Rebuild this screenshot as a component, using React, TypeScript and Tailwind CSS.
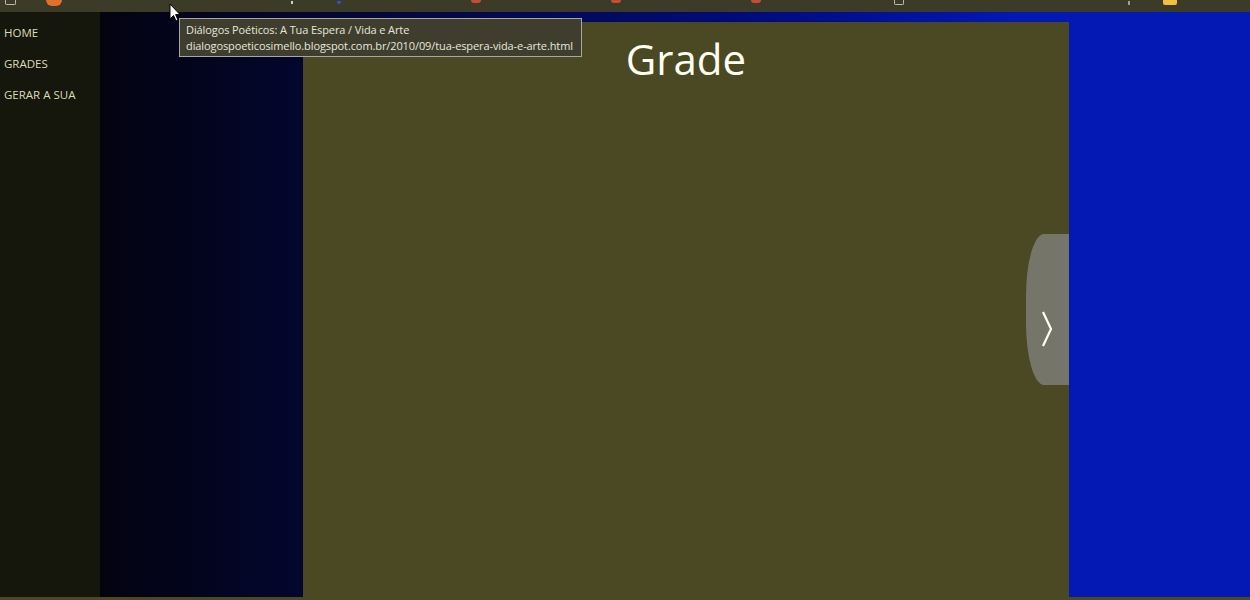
import React from "react";

function Cursor() {
  return (
    <svg width="12" height="19" viewBox="0 0 12 19" className="absolute left-[169px] top-[3px]">
      <path d="M1 1 L1 16 L4.5 12.5 L7 18 L9 17 L6.6 11.6 L11 11.6 Z" fill="#ffffff" stroke="#000000" strokeWidth="1" strokeLinejoin="round" />
    </svg>
  );
}

export default function App() {
  const nav = ["HOME", "GRADES", "GERAR A SUA"];
  return (
    <div className="relative w-[1250px] h-[600px] overflow-hidden flex flex-col font-['Open_Sans',sans-serif]">
      {/* bookmark bar remnant */}
      <div className="h-[12px] shrink-0 bg-[#3c3b27] flex items-start">
        <div className="ml-[5px] w-[11px] h-[5px] border-x border-b border-[#b8b8b0] rounded-b-[2px]" />
        <div className="ml-[30px] w-[16px] h-[6px] bg-[#e0702a] rounded-b-full" />
        <div className="ml-[229px] mt-[1px] w-[2px] h-[3px] bg-[#d0d0c8]" />
        <div className="ml-[44px] mt-[1px] w-[4px] h-[3px] bg-[#3050d0] rounded-b-full" />
        <div className="ml-[130px] w-[10px] h-[3px] bg-[#c05030] rounded-b-full" />
        <div className="ml-[130px] w-[10px] h-[3px] bg-[#c05030] rounded-b-full" />
        <div className="ml-[130px] w-[10px] h-[3px] bg-[#c05030] rounded-b-full" />
        <div className="ml-[133px] w-[10px] h-[5px] border-x border-b border-[#b8b8b0] rounded-b-[2px]" />
        <div className="ml-[224px] mt-[1px] w-[2px] h-[4px] bg-[#a0a098]" />
        <div className="ml-[33px] w-[14px] h-[5px] bg-[#f0c040] rounded-b-[2px]" />
      </div>

      <div className="flex-1 flex min-h-0">
        {/* sidebar */}
        <nav className="w-[100px] shrink-0 bg-[#15160c] pt-[5px] flex flex-col">
          {nav.map((n) => (
            <div key={n} className="h-[31px] pl-[4px] flex items-center text-[11.5px] text-[#dcdcb6] leading-none">
              {n}
            </div>
          ))}
        </nav>

        {/* content area */}
        <div className="flex-1 flex pt-[10px] pl-[203px] bg-gradient-to-r from-[#030310] via-[#000a78] via-[55%] to-[#0418b4] to-[80%]">
          <main className="relative w-[766px] bg-[#4a4923] flex flex-col items-center pt-[12px]">
            <h1 className="text-[42px] leading-[50px] text-[#fffff2] font-normal">Grade</h1>
            <button className="absolute right-0 top-[212px] w-[43px] h-[151px] bg-[#76756a] rounded-tl-[18px_62px] rounded-bl-[18px_62px] flex items-start pt-[77px] pl-[15px]">
              <svg width="12" height="36" viewBox="0 0 12 36">
                <polyline points="2,1 10,18 2,35" fill="none" stroke="#fffff0" strokeWidth="2.2" strokeLinejoin="miter" />
              </svg>
            </button>
          </main>
        </div>
      </div>

      <div className="h-[3px] shrink-0 bg-[#4a4923]" />

      {/* tooltip */}
      <div className="absolute left-[179px] top-[18px] w-[403px] h-[39px] bg-[#3f3e2e] border border-[#a8a8a0] pl-[6px] pt-[3px] text-[11px] leading-[16px] tracking-[-0.1px] text-[#e6e6da]">
        <div>Diálogos Poéticos: A Tua Espera / Vida e Arte</div>
        <div>dialogospoeticosimello.blogspot.com.br/2010/09/tua-espera-vida-e-arte.html</div>
      </div>

      <Cursor />
    </div>
  );
}
